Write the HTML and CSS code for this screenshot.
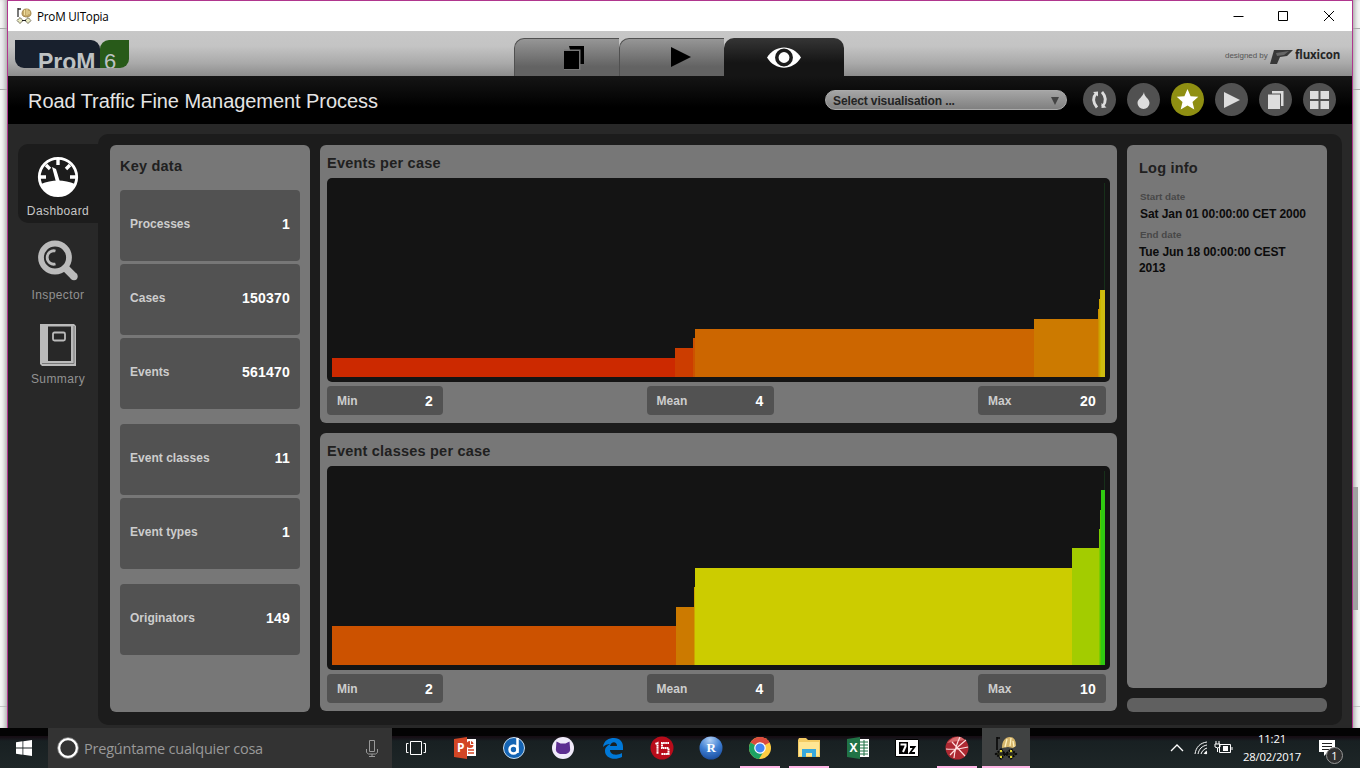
FILE: index.html
```html
<!DOCTYPE html>
<html lang="en">
<head>
<meta charset="utf-8">
<title>ProM UITopia</title>
<link rel="stylesheet" href="styles.css">
</head>
<body>
<div class="screen">
  <div class="desktop">
    <div class="backdrop backdrop-left"></div>
    <div class="window">
      <div class="titlebar">
        <svg class="app-icon" width="16" height="16" viewBox="0 0 16 16"><path d="M2 0v9M2 1h3" stroke="#333" stroke-width="1.300" fill="none"/><path d="M6 6q0-5 4.500-5t4.500 5l-1 2-4 1-3-1z" fill="#c5a968" stroke="#a58a50"/><path d="M8.500 2v5M11 1v6M13 3v3" stroke="#f0e0a0"/><path d="M4 9.500l3 3-3 3-3-3zM12 9.500l3 3-3 3-3-3z" fill="#e9eac0" stroke="#544e3e" stroke-dasharray="2 .7"/><path d="M6 12.500h4" stroke="#222"/></svg>
        <span class="app-name">ProM UITopia</span>
        <svg class="win-controls" width="104" height="12" viewBox="0 0 104 12" fill="none" stroke="#000"><path d="M.5 6.500h10M45.500 1.500h9v9h-9zM91 1l10 10M101 1L91 11"/></svg>
      </div>
      <div class="header">
        <div class="logo"><span class="logo-prom">ProM</span><span class="logo-six">6</span></div>
        <div class="tabs">
          <div class="tab"><svg width="20" height="24" viewBox="0 0 20 24"><path d="M5 0h15v18H10z" fill="#000"/><path d="M0 3.500h16.500V24H0z" fill="#777"/><path d="M0 5h15v18H0z" fill="#000"/></svg></div>
          <div class="tab tab-play"><svg width="20" height="20" viewBox="0 0 20 20"><path d="M0 0l20 10L0 20z" fill="#000"/></svg></div>
          <div class="tab tab-active"><svg width="34" height="21" viewBox="0 0 34 21"><path d="M0 10.500C8-3 26-3 34 10.500 26 24 8 24 0 10.500z" fill="#fff"/><circle cx="17" cy="10.500" r="7.200" fill="#fff" stroke="#1c1c1c" stroke-width="3.500"/></svg></div>
        </div>
        <div class="credit"><span class="credit-by">designed by</span><svg width="23" height="16" viewBox="0 0 23 16"><path d="M4 1h19l-6 6-7 1-3 7H0z" fill="#383838"/><path d="M6 4l13-2-5 4-7 1z" fill="#666"/></svg><span class="credit-name">fluxicon</span></div>
      </div>
      <div class="toolbar">
        <div class="process-title">Road Traffic Fine Management Process</div>
        <div class="select"><span>Select visualisation ...</span><svg width="8" height="8" viewBox="0 0 8 8"><path d="M0 0h8L4 8z" fill="#444"/></svg></div>
        <div class="tools">
          <div class="tool"><svg viewBox="0 0 33 33"><g fill="none" stroke="#ddd" stroke-width="2.800"><path d="M13.500 10Q7.500 16.500 14 24.500M19 9Q25.500 16.500 19.500 23.500"/></g><path d="M10 9l5-.5v5zM23.500 24.500l-5 .5v-5z" fill="#ddd"/></svg></div>
          <div class="tool"><svg viewBox="0 0 33 33"><path d="M17 9c0 5 5.500 6.500 5.500 11a6 6 0 0 1-12 0C10.500 16 16 14 17 9z" fill="#ddd"/></svg></div>
          <div class="tool tool-on"><svg viewBox="0 0 33 33"><path d="M16.500 6l3.100 7.200 7.700.6-5.800 5.100 1.800 7.600-6.800-4-6.800 4 1.800-7.600-5.800-5.100 7.700-.6z" fill="#fff"/></svg></div>
          <div class="tool"><svg viewBox="0 0 33 33"><path d="M9 9l16 8-16 8z" fill="#ddd"/></svg></div>
          <div class="tool"><svg viewBox="0 0 33 33"><path d="M13 8h11.500v15H22V10.500h-9z" fill="#ddd"/><path d="M9 11.500h12V26H9z" fill="#ddd"/></svg></div>
          <div class="tool"><svg viewBox="0 0 33 33"><path d="M7 8h8.500v8H7zM17.500 8H26v8h-8.500zM7 18h8.500v8H7zM17.500 18H26v8h-8.500z" fill="#ddd"/></svg></div>
        </div>
      </div>
      <div class="body">
        <div class="sidebar">
          <div class="side-item side-active">
            <svg width="42" height="42" viewBox="0 0 42 42"><circle cx="21" cy="21" r="18.700" fill="#1c1c1c" stroke="#fff" stroke-width="2.800"/><path d="M4 28q8-3.500 17-3.500T38 28a18 18 0 0 1-34 0z" fill="#fff"/><path d="M21 3v6M3 21h6M39 21h-6M9 9l4 4M33 9l-4 4" stroke="#fff" stroke-width="3.400"/><path d="M15 11l4 2 4 13h-4z" fill="#fff"/></svg>
            <span>Dashboard</span>
          </div>
          <div class="side-item">
            <svg width="42" height="42" viewBox="0 0 42 42"><circle cx="18" cy="17.500" r="14" fill="none" stroke="#bbb" stroke-width="5.800"/><path d="M18.500 11a6.700 6.700 0 1 0 0 13" fill="none" stroke="#bbb" stroke-width="2.800"/><path d="M28 27.500l9 9" stroke="#bbb" stroke-width="7.500"/><circle cx="37" cy="36.500" r="3.700" fill="#bbb"/></svg>
            <span>Inspector</span>
          </div>
          <div class="side-item">
            <svg width="42" height="42" viewBox="0 0 42 42"><path d="M3 0h34l2 2v40H5l-2-2z" fill="#bbb"/><path d="M11 2.500h23V37H11z" fill="#282828"/><path d="M37 2v37.500H5" fill="none" stroke="#777"/><rect x="16" y="8.500" width="12" height="8" rx="1.500" fill="none" stroke="#bbb" stroke-width="1.800"/></svg>
            <span>Summary</span>
          </div>
        </div>
        <div class="panel">
          <section class="card key-data">
            <h2>Key data</h2>
            <div class="tile-group">
              <div class="tile"><span>Processes</span><b>1</b></div>
              <div class="tile"><span>Cases</span><b>150370</b></div>
              <div class="tile"><span>Events</span><b>561470</b></div>
            </div>
            <div class="tile-group">
              <div class="tile"><span>Event classes</span><b>11</b></div>
              <div class="tile"><span>Event types</span><b>1</b></div>
            </div>
            <div class="tile-group">
              <div class="tile"><span>Originators</span><b>149</b></div>
            </div>
          </section>
          <div class="charts">
            <section class="card chart-card">
              <h2>Events per case</h2>
              <div class="plot">
                <svg width="783" height="204" viewBox="0 0 783 204" shape-rendering="crispEdges">
                  <path d="M5 179.500h343V199H5z" fill="#cc2900"/><path d="M348 170h19v29h-19z" fill="#cc3d00"/><path d="M366 160h2v39h-2z" fill="#cc5200"/><path d="M367.500 150.500H707V199H367.500z" fill="#cc6600"/><path d="M707 141h65v58h-65z" fill="#cc7a00"/><path d="M771 131h2v68h-2z" fill="#cc8f00"/><path d="M772 121h2v78h-2z" fill="#cca300"/><path d="M773 112h2v87h-2z" fill="#ccb800"/><path d="M774 112h4v87h-4z" fill="#cfbd10"/><path d="M777 5h1v107h-1z" fill="#17301a"/>
                </svg>
              </div>
              <div class="stats"><div class="stat stat-min"><span>Min</span><b>2</b></div><div class="stat stat-mean"><span>Mean</span><b>4</b></div><div class="stat stat-max"><span>Max</span><b>20</b></div></div>
            </section>
            <section class="card chart-card">
              <h2>Event classes per case</h2>
              <div class="plot">
                <svg width="783" height="204" viewBox="0 0 783 204" shape-rendering="crispEdges">
                  <path d="M5 160h344v39H5z" fill="#cc5200"/><path d="M349 141h18v58h-18z" fill="#cc7a00"/><path d="M367 121h1v78h-1z" fill="#cca300"/><path d="M368 102h377v97H368z" fill="#cccc00"/><path d="M745 82h28v117h-28z" fill="#a3cc00"/><path d="M772 63h1v136h-1z" fill="#7acc00"/><path d="M773 44h1v155h-1z" fill="#52cc00"/><path d="M774 24h4v175h-4z" fill="#30c911"/><path d="M777 5h1v19h-1z" fill="#17301a"/>
                </svg>
              </div>
              <div class="stats"><div class="stat stat-min"><span>Min</span><b>2</b></div><div class="stat stat-mean"><span>Mean</span><b>4</b></div><div class="stat stat-max"><span>Max</span><b>10</b></div></div>
            </section>
          </div>
          <div class="info-column">
            <section class="card log-info">
              <h2>Log info</h2>
              <dl><dt>Start date</dt><dd>Sat Jan 01 00:00:00 CET 2000</dd><dt>End date</dt><dd>Tue Jun 18 00:00:00 CEST 2013</dd></dl>
            </section>
            <div class="info-foot"></div>
          </div>
        </div>
      </div>
    </div>
    <div class="backdrop backdrop-right"><div class="scroll-thumb"></div></div>
  </div>
  <div class="taskbar">
    <div class="start"><svg width="16" height="16" viewBox="0 0 16 16"><path d="M0 2.200l6.500-.9v6.200H0zM7.300 1.200L16 0v7.500H7.300zM0 8.400h6.500v6.300L0 13.800zM7.300 8.400H16V16l-8.700-1.200z" fill="#fff"/></svg></div>
    <div class="search">
      <svg width="22" height="22" viewBox="0 0 22 22"><circle cx="11" cy="11" r="9" fill="none" stroke="#fff" stroke-width="2.600"/><circle cx="11" cy="11" r="10.400" fill="none" stroke="#888" stroke-width=".8"/></svg>
      <span>Pregúntame cualquier cosa</span>
      <svg width="12" height="17" viewBox="0 0 12 17" fill="none" stroke="#999"><path d="M3.500.5h5v11h-5zM.5 9v3.500l2 1.500h7l2-1.500V9M6 14v2.500M3 16.500h6"/></svg>
    </div>
    <div class="apps">
      <div class="app"><svg width="24" height="24" viewBox="0 0 24 24" fill="none" stroke="#fff"><path d="M6.500 5.500h11v13h-11zM4.500 7.500h-2v9h2M19.500 7.500h2v9h-2"/></svg></div>
      <div class="app"><svg width="24" height="24" viewBox="0 0 24 24"><path d="M12 3h11v17H12z" fill="#fff"/><path d="M15 14h6M15 17h6" stroke="#d24625" stroke-width="1.300"/><circle cx="17" cy="8.500" r="3.500" fill="#d24625"/><path d="M17.500 4.500v4h4" stroke="#fff" fill="none"/><path d="M1 3l13-2v22L1 21z" fill="#d24625"/><text x="4" y="16" class="office-letter">P</text></svg></div>
      <div class="app"><svg width="24" height="24" viewBox="0 0 24 24"><circle cx="12" cy="12" r="10.500" fill="#1464b4" stroke="#c7dced"/><circle cx="11.500" cy="13.500" r="4" fill="none" stroke="#fff" stroke-width="2.500"/><path d="M15.500 2v15" stroke="#fff" stroke-width="2.500"/></svg></div>
      <div class="app"><svg width="24" height="24" viewBox="0 0 24 24"><circle cx="12" cy="12" r="11" fill="#f0eafa"/><path d="M5.500 5.500l4 2h5l4-2 .5 6q1 5-4 6.500H9q-5-1.500-4-6.500z" fill="#5c2d91"/></svg></div>
      <div class="app"><svg width="24" height="24" viewBox="0 0 24 24"><path d="M2 11C3 4 8 2 13 2c6 0 9 4 9 9v3H9c0 5 7 6 12 3v4c-8 4-17 1-17-6 0-4 3-6 6-7-4 0-6 1-8 3zm7-1h7c0-5-6-5-7 0z" fill="#0078d7"/></svg></div>
      <div class="app"><svg width="24" height="24" viewBox="0 0 24 24"><circle cx="12" cy="12" r="11.500" fill="#b80c1a"/><path d="M5.500 8l2-1v11M19 7h-7v5h6.500v6H11" fill="none" stroke="#fff" stroke-width="2" stroke-dasharray="1.700 .4"/></svg></div>
      <div class="app"><svg width="24" height="24" viewBox="0 0 24 24"><defs><radialGradient id="rblue" cx=".45" cy=".15" r=".85"><stop stop-color="#b0d0f5"/><stop offset=".55" stop-color="#3f7fd3"/><stop offset="1" stop-color="#1c4f9f"/></radialGradient></defs><circle cx="12" cy="12" r="11.500" fill="url(#rblue)"/><text x="7.500" y="16" class="r-letter">R</text></svg></div>
      <div class="app running"><svg width="24" height="24" viewBox="0 0 24 24"><circle cx="12" cy="12" r="11" fill="#ffcd42"/><path d="M12 12L2.500 6.500A11 11 0 0 1 21.500 6.500L17 9z" fill="#dc4b3e"/><path d="M12 12l4 3-5 8A11 11 0 0 1 2.500 6.500z" fill="#1da263"/><path d="M12 1a11 11 0 0 1 9.800 6H12z" fill="#dc4b3e"/><circle cx="12" cy="12" r="5.200" fill="#4285f4" stroke="#fff" stroke-width="1.200"/></svg></div>
      <div class="app running"><svg width="24" height="24" viewBox="0 0 24 24"><path d="M1 4l1-2h7l2 2h12v17H1z" fill="#f3cb63"/><path d="M2 6h20v14H2z" fill="#ffe693"/><path d="M5 13h14v8h-4v-4H9v4H5z" fill="#38a8dc"/></svg></div>
      <div class="app"><svg width="24" height="24" viewBox="0 0 24 24"><path d="M12 3h11v18H12z" fill="#fff"/><path d="M14 6h8M14 9h8M14 12h8M14 15h8M14 18h8M18 4v16" stroke="#217346"/><path d="M1 3l13-2v22L1 21z" fill="#217346"/><text x="3.500" y="16" class="office-letter">X</text></svg></div>
      <div class="app"><svg width="24" height="24" viewBox="0 0 24 24"><path d="M.5 3.500h23v17H.5z" fill="#fff" stroke="#000"/><path d="M4 6h9v12H4z" fill="#000"/><path d="M5.500 8.500h5v2L8 16" fill="none" stroke="#fff" stroke-width="2"/><path d="M15 11h4.500L15 17h5" fill="none" stroke="#000" stroke-width="1.800"/></svg></div>
      <div class="app running"><svg width="24" height="24" viewBox="0 0 24 24"><circle cx="12" cy="12" r="11.500" fill="#ad2932"/><path d="M2 7Q12-4 20 4q-8 1-18 3" fill="#d76c6e"/><path d="M1 13q10 1 22-2M15 1q-5 10-6 21M7 6l13 14M21 4Q13 10 5 19" fill="none" stroke="#ffdfdf" stroke-width="1.200"/></svg></div>
      <div class="app running current"><svg width="24" height="24" viewBox="0 0 24 24"><path d="M3 1v13M3 2h3" stroke="#080808" stroke-width="1.600"/><path d="M8 12C8 5 11 1 16 1q6 0 6 9l-3 2-5-1z" fill="#d5b56b"/><path d="M13 3l-2 8M17 2l-1 8M19 5l1 6" stroke="#fff0bd" stroke-width="1.300"/><path d="M7 13.500l4 4.500-4 4.500L2 18zM17 13.500l5 4.500-5 4.500-5-4.500z" fill="#4a4b30" stroke="#080808" stroke-width="2" stroke-dasharray="2 1"/><path d="M1 18h22" stroke="#080808"/><path d="M6 14h2v2H6zM6 20h2v2H6zM16 14h2v2h-2zM16 20h2v2h-2z" fill="#e2d72d"/></svg></div>
    </div>
    <div class="tray">
      <svg width="66" height="16" viewBox="0 0 66 16" fill="none" stroke="#fff"><path d="M1 11l6-6 6 6" stroke-width="1.300"/><path d="M25 14C26 7 30 3 37 2M28 14c1-5 4-8 9-9M31 14c1-3 3-5 6-6M34 14q1-2 3-3"/><circle cx="36" cy="13" r="1.200" fill="#fff" stroke="none"/><path d="M49.500 4.500h11v8h-11zM62 7v3M45 4h5v3q-2 2-5 0zM46 4V1M49 4V1M47.500 8v4"/><path d="M53 6h5v5h-5z" fill="#fff" stroke="none"/></svg>
      <div class="clock"><span>11:21</span><span>28/02/2017</span></div>
      <div class="notify"><svg width="16" height="16" viewBox="0 0 16 16"><path d="M0 0h16v12H9l-4 4v-4H0z" fill="#fff"/><path d="M3 3.500h10M3 6.500h10M3 9.500h7" stroke="#222"/></svg><span class="badge">1</span></div>
    </div>
  </div>
</div>
</body>
</html>
```
FILE: styles.css
```css
* { box-sizing: border-box; }
body { margin: 0; overflow: hidden; font-family: "Liberation Sans", Arial, sans-serif; }
svg { display: block; flex: none; }
.screen { width: 1360px; height: 768px; display: flex; flex-direction: column; }
.desktop { height: 728px; display: flex; }

.backdrop { width: 7px; background: linear-gradient(#f5f5f5 28px, #aaa 28px 29px, #ededf0 29px 89px, #aaa 89px 90px, #f6f6f6 90px 706px, #c8c8c8 706px 707px, #f5f5f5 707px); }
.backdrop-left { box-shadow: inset -4px 0 4px -2px #aaa; }
.backdrop-right { box-shadow: inset 4px 0 4px -2px #aaa; padding-top: 487px; }
.scroll-thumb { width: 5px; height: 123px; background: #a0a0a0; }

.window { width: 1346px; border: 1px solid #b0368e; border-bottom: 0; display: flex; flex-direction: column; background: #282828; }
.titlebar { height: 30px; background: #fff; display: flex; align-items: center; padding: 0 15px 1px 8px; }
.app-name { font: 11.700px/16px "Open Sans", sans-serif; letter-spacing: -.22px; margin-left: 5px; flex: 1; }

.header { height: 45px; display: flex; align-items: flex-start; background: linear-gradient(#c7c7c7 0, #c4c4c4 15px, #aaa 32px, #8c8c8c); }
.logo { width: 114px; height: 28px; margin: 9px 1px 0 7px; display: flex; overflow: hidden; border-radius: 0 0 9px 9px; color: #bec2c3; }
.logo-prom { width: 85px; height: 28px; background: #18202d; border-radius: 0 9px 0 0; font-weight: bold; font-size: 23px; line-height: 45px; padding-left: 23px; }
.logo-six { width: 29px; height: 28px; background: #285a19; border-radius: 9px 0 0 0; font-size: 22px; line-height: 44px; padding-left: 4px; }
.tabs { display: flex; margin: 7px 0 0 384px; }
.tab { width: 105px; height: 38px; display: flex; justify-content: center; padding: 7px 0 0 14px; border: solid #505050; border-width: 1px 0 0 1px; border-radius: 10px 0 0 0; background: linear-gradient(#969696, #636363 75%); }
.tab-play { padding: 8px 0 0 17px; }
.tab-active { width: 120px; margin-right: 1px; padding: 9px 0 0; border: 0; border-radius: 10px 10px 0 0; background: linear-gradient(#353535, #151515 65%); }
.credit { margin: 15px 0 0 380px; height: 18px; display: flex; align-items: center; }
.credit-by { font-size: 8px; letter-spacing: -.05px; color: #555; width: 45px; white-space: nowrap; }
.credit svg { margin-top: 4px; margin-right: 2px; }
.credit-name { font: bold 11.500px/16px "Open Sans", sans-serif; letter-spacing: -.15px; color: #252525; }

.toolbar { height: 48px; display: flex; align-items: center; background: linear-gradient(#151515, #000 65%); }
.process-title { width: 817px; padding: 2px 0 0 20px; font-size: 20px; letter-spacing: -.06px; color: #e4e4e4; white-space: nowrap; }
.select { width: 242px; height: 20px; border-radius: 10px; padding: 1px 7px 0 7px; display: flex; align-items: center; justify-content: space-between; background: linear-gradient(#a5a5a5, #808080); border: 1px solid #aaa; font-size: 12px; letter-spacing: -.12px; font-weight: bold; color: #242424; }
.tools { display: flex; gap: 11px; margin-left: 16px; margin-top: -1px; }
.tool { width: 33px; height: 33px; border-radius: 50%; background: #515151; }
.tool-on { background: #8f8f12; }

.body { height: 604px; padding: 10px 10px 3px; display: flex; }
.sidebar { width: 80px; padding-top: 10px; display: flex; flex-direction: column; gap: 5px; }
.side-item { height: 79px; display: flex; flex-direction: column; align-items: center; padding-top: 12px; font-size: 12px; line-height: 14px; letter-spacing: .4px; color: #929292; }
.side-item span { margin-top: 6px; }
.side-active { background: #1c1c1c; border-radius: 10px 0 0 10px; color: #c7c7c7; }
.panel { width: 1244px; height: 591px; border-radius: 10px; background: #1c1c1c; padding: 11px 12px; display: flex; gap: 10px; }
.card { border-radius: 6px; background: #777; }
h2 { margin: 0; font-size: 14.500px; line-height: 18px; letter-spacing: .22px; color: #202020; }

.key-data { width: 200px; height: 567px; padding: 12px 10px 0; display: flex; flex-direction: column; gap: 15px; }
.tile-group { display: flex; flex-direction: column; gap: 3px; }
.tile { height: 71px; padding: 0 10px 4px; border-radius: 4px; background: #525252; display: flex; align-items: center; justify-content: space-between; }
.tile span, .stat span { font-size: 12px; font-weight: bold; letter-spacing: .02px; color: #cdcdcd; }
.tile b, .stat b { font-size: 14px; letter-spacing: .2px; color: #fff; }

.charts { width: 797px; display: flex; flex-direction: column; gap: 10px; }
.chart-card { height: 278px; padding: 9px 7px 0; }
.plot { width: 783px; height: 204px; margin-top: 6px; border-radius: 5px; background: #141414; }
.stats { display: flex; justify-content: space-between; margin-top: 4px; padding-right: 4px; }
.stat { height: 29px; padding: 0 10px 0 10px; border-radius: 4px; background: #525252; display: flex; align-items: center; justify-content: space-between; }
.stat-min { width: 116px; }
.stat-mean { width: 127px; margin-right: 1px; }
.stat-max { width: 128px; }

.info-column { display: flex; flex-direction: column; gap: 10px; }
.log-info { width: 200px; height: 543px; padding: 14px 12px; }
.info-foot { height: 14px; border-radius: 6px; background: #606060; }
dl { margin: 14px 0 0; font-weight: bold; }
dt { font-size: 9.800px; line-height: 12px; color: #484848; padding-left: 1px; letter-spacing: 0; }
dd { margin: 3px -10px 6px 0; font-size: 12px; line-height: 16px; color: #0b0b0b; letter-spacing: -.08px; padding-right: 20px; }
dd:nth-of-type(1) { padding-right: 0; margin: 3px -10px 7px 1px; }

.taskbar { height: 40px; display: flex; background: linear-gradient(#030303 8px, #160e14 8px 9px, #182022 13px, #1e2627); color: #fff; font-family: "Open Sans", sans-serif; }
.start { width: 48px; padding: 12px 0 0 16px; }
.search { width: 344px; background: #333; display: flex; align-items: center; padding: 0 14px 0 9px; color: #999; font-size: 14.500px; letter-spacing: -.22px; }
.search span { flex: 1; margin-left: 5px; }
.apps { display: flex; width: 780px; }
.app { width: 48px; margin-right: 1.150px; height: 40px; display: flex; justify-content: center; align-items: center; flex: none; }
.running { background: linear-gradient(#ffb6e6, #ffb6e6) 50% 100% / 40px 2px no-repeat; }
.current { background: linear-gradient(#ffb6e6, #ffb6e6) 0 100% / 48px 2px no-repeat, #404242; }
.office-letter { font: bold 12px "Open Sans", sans-serif; fill: #fff; }
.r-letter { font: bold 13px "Liberation Serif", serif; fill: #fff; }
.tray { width: 188px; display: flex; align-items: center; padding-left: -2px; }
.tray > svg { margin-left: -2px; }
.clock { width: 68px; margin-left: 2px; display: flex; flex-direction: column; align-items: center; font-size: 11.300px; line-height: 18px; letter-spacing: -.2px; }
.notify { position: relative; margin-left: 13px; }
.badge { position: absolute; left: 7px; top: 7px; width: 17px; height: 17px; border: 1px solid #999; border-radius: 50%; background: #303030; font-size: 11px; line-height: 15px; text-align: center; }
```
